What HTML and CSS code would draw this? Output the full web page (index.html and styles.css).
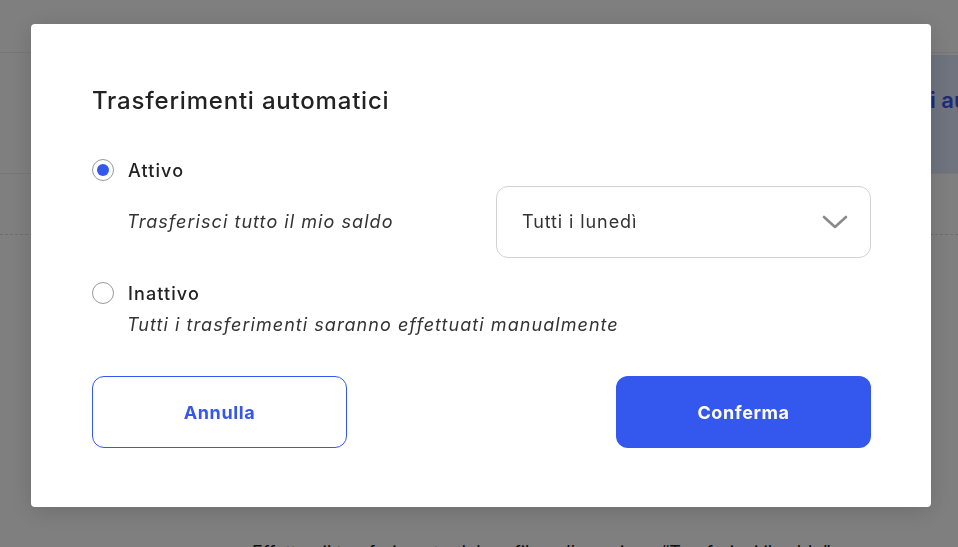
FILE: index.html
```html
<!DOCTYPE html>
<html lang="it">
<head>
  <meta charset="UTF-8" />
  <meta name="viewport" content="width=device-width, initial-scale=1.0"/>
  <title>Trasferimenti automatici</title>
  <link rel="stylesheet" href="styles.css">
</head>
<body>

  <div class="page">
    <div class="topbar"></div>
    <div class="section">
      <div class="banner">i automatici</div>
    </div>
    <div class="subsection"></div>
    <div class="content">
      <p class="note">Effettua il trasferimento dal profilo nella sezione “Trasferisci il saldo”</p>
    </div>
  </div>

  <div class="overlay"></div>

  <div class="modal">
    <h2>Trasferimenti automatici</h2>

    <label class="option">
      <span class="radio checked"></span>
      <span class="option-label">Attivo</span>
    </label>
    <div class="option-detail with-select">
      <span class="hint">Trasferisci tutto il mio saldo</span>
      <div class="select">
        <span>Tutti i lunedì</span>
        <svg width="26" height="16" viewBox="0 0 26 16">
          <path d="M2 3 L13 13 L24 3" fill="none" stroke="#8a8a8a" stroke-width="2.6" stroke-linecap="round" stroke-linejoin="round"/>
        </svg>
      </div>
    </div>

    <label class="option second">
      <span class="radio"></span>
      <span class="option-label">Inattivo</span>
    </label>
    <div class="option-detail">
      <span class="hint">Tutti i trasferimenti saranno effettuati manualmente</span>
    </div>

    <div class="actions">
      <button class="btn btn-outline">Annulla</button>
      <button class="btn btn-primary">Conferma</button>
    </div>
  </div>

</body>
</html>
```

FILE: styles.css
```css
body {
  margin: 0;
  background: white;
  font-family: Inter, "Noto Sans", sans-serif;
  color: #222;
}

.page {
  height: 547px;
  overflow: hidden;
}

.topbar {
  height: 52px;
  border-bottom: 1px solid #eee;
}

.section {
  height: 121px;
  border-bottom: 1px solid #eee;
  display: flex;
  justify-content: flex-end;
  padding-top: 2px;
  box-sizing: border-box;
}

.banner {
  width: 40px;
  background: #dfe8ff;
  color: #3a55f0;
  font-weight: 600;
  font-size: 22px;
  padding: 32px 0 0 12px;
  height: 118px;
  box-sizing: border-box;
  overflow: hidden;
  white-space: nowrap;
}

.subsection {
  height: 60px;
  border-bottom: 1px dashed #ddd;
}

.content {
  padding-left: 252px;
}

.note {
  margin: 307px 0 0;
  font-size: 18px;
  white-space: nowrap;
}

.overlay {
  position: fixed;
  inset: 0;
  background: rgba(0, 0, 0, 0.5);
}

.modal {
  position: fixed;
  left: 31px;
  top: 24px;
  width: 900px;
  height: 483px;
  box-sizing: border-box;
  background: white;
  border-radius: 4px;
  box-shadow: 0 4px 24px rgba(0, 0, 0, 0.15);
  padding: 62px 60px 0 61px;
}

.modal h2 {
  margin: 0;
  font-size: 24px;
  font-weight: 500;
  line-height: 30px;
  letter-spacing: 0.8px;
  color: #222;
}

.option {
  display: flex;
  align-items: center;
  height: 24px;
  margin-top: 42px;
}

.option.second {
  margin-top: 23px;
}

.radio {
  width: 20px;
  height: 20px;
  border: 1px solid #9a9a9a;
  border-radius: 50%;
  box-sizing: content-box;
  display: flex;
  align-items: center;
  justify-content: center;
}

.radio.checked::after {
  content: "";
  width: 12px;
  height: 12px;
  border-radius: 50%;
  background: #3457ee;
}

.option-label {
  margin-left: 14px;
  font-size: 18px;
  font-weight: 500;
  letter-spacing: 1.1px;
}

.option-detail {
  padding-left: 35px;
  margin-top: 8px;
  line-height: 24px;
}

.option-detail.with-select {
  display: flex;
  align-items: center;
  justify-content: space-between;
  margin-top: 4px;
}

.hint {
  font-style: italic;
  font-size: 18px;
  letter-spacing: 1.05px;
  color: #333;
}

.select {
  width: 375px;
  height: 72px;
  box-sizing: border-box;
  border: 1px solid #d2d2d2;
  border-radius: 12px;
  display: flex;
  align-items: center;
  justify-content: space-between;
  padding: 0 22px 0 25px;
  font-size: 18px;
  letter-spacing: 0.9px;
  color: #333;
}

.actions {
  display: flex;
  justify-content: space-between;
  margin-top: 39px;
}

.btn {
  width: 255px;
  height: 72px;
  border-radius: 12px;
  font-family: inherit;
  font-size: 18px;
  font-weight: 700;
  letter-spacing: 0.6px;
  cursor: pointer;
}

.btn-outline {
  background: white;
  border: 1px solid #3457ee;
  color: #3457ee;
}

.btn-primary {
  background: #3457ee;
  border: none;
  color: white;
}
```
